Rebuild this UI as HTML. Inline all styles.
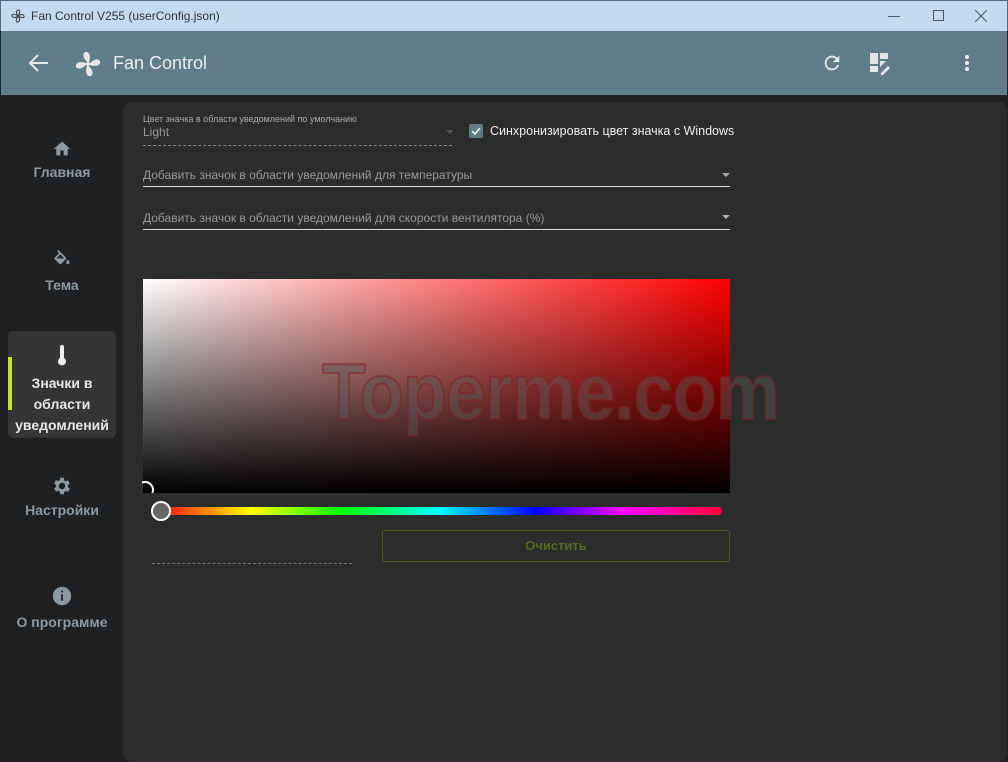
<!DOCTYPE html>
<html><head><meta charset="utf-8"><style>
*{margin:0;padding:0;box-sizing:border-box}
body{width:1008px;height:752px;overflow:hidden;background:#1f2022;font-family:"Liberation Sans","DejaVu Sans",sans-serif;position:relative}
.abs{position:absolute}
.title{left:0;top:0;width:1008px;height:31px;background:#c4daf0;border:1px solid #5a6a78;border-bottom:none}
.title span{position:absolute;left:30px;top:8px;font-size:12px;color:#333}
.appbar{left:1px;top:31px;width:1006px;height:64px;background:#5f7c89}
.side{left:1px;top:95px;width:121px;height:657px;background:#1f2022}
.panel{left:123px;top:102px;width:884px;height:660px;background:#2b2d2d;border-radius:8px}
.nav{position:absolute;left:0;width:122px;text-align:center;color:#8c9aa4;font-weight:bold;font-size:14px}
.lbl{color:#999;font-size:12px}
.line{height:1px;background:#ddd}
</style></head><body>
<div class="abs title">
<svg class="abs" style="left:9px;top:7px" width="16" height="16" viewBox="0 0 24 24"><path fill="none" stroke="#444" stroke-width="1.6" d="M12 12C9 9 9 4 12 3c3-1 4 3 0 9zM12 12c3 3 3 8 0 9-3 1-4-3 0-9zM12 12c3-3 8-3 9 0 1 3-3 4-9 0zM12 12c-3 3-8 3-9 0-1-3 3-4 9 0z"/></svg>
<span>Fan Control V255 (userConfig.json)</span>
<div class="abs" style="left:887px;top:15px;width:12px;height:1px;background:#555"></div>
<div class="abs" style="left:932px;top:9px;width:11px;height:11px;border:1px solid #555"></div>
<svg class="abs" style="left:974px;top:9px" width="12" height="12"><path d="M0 0L12 12M12 0L0 12" stroke="#555" stroke-width="1"/></svg>
</div>
<div class="abs appbar">
<svg class="abs" style="left:27px;top:22px" width="22" height="20" viewBox="0 0 22 20"><path d="M20 10H3M10 2L2 10l8 8" stroke="#e8e8e8" stroke-width="2" fill="none"/></svg>
<svg class="abs" style="left:72px;top:18px" width="30" height="30" viewBox="0 0 24 24"><path fill="#e6e6e6" d="M12 11c-2-2-5-5-3-8 2-2 6 0 4 7zM13 12c2-2 5-5 8-3 2 2 0 6-7 4zM12 13c2 2 5 5 3 8-2 2-6 0-4-7zM11 12c-2 2-5 5-8 3-2-2 0-6 7-4z"/><circle cx="12" cy="12" r="1.6" fill="#e6e6e6"/></svg>
<div class="abs" style="left:112px;top:22px;font-size:18px;color:#eee">Fan Control</div>
<svg class="abs" style="left:820px;top:21px" width="22" height="22" viewBox="0 0 24 24"><path fill="#e6e6e6" d="M17.65 6.35A7.96 7.96 0 0 0 12 4a8 8 0 1 0 7.73 10h-2.08A6 6 0 1 1 12 6c1.66 0 3.14.69 4.22 1.78L13 11h7V4l-2.35 2.35z"/></svg>
<svg class="abs" style="left:868px;top:21px" width="24" height="24" viewBox="0 0 24 24"><path fill="#e6e6e6" d="M1 1h8v11H1zM11 1h8v6h-8zM1 14h8v6H1zM11 9h6l-6 6z"/><path d="M12 21l7-7 2 2-7 7h-2z" fill="#e6e6e6"/></svg>
<div class="abs" style="left:964px;top:24px;width:4px;height:4px;border-radius:2px;background:#eee;box-shadow:0 6px 0 #eee,0 12px 0 #eee"></div>
</div>
<div class="abs side">
<div class="nav" style="top:44px"><svg width="20" height="18" viewBox="0 0 24 22"><path fill="#8c9aa4" d="M10 20v-6h4v6h5v-8h3L12 3 2 12h3v8z"/></svg><div style="margin-top:4px">Главная</div></div>
<div class="nav" style="top:155px"><svg width="22" height="20" viewBox="0 0 24 24"><path fill="#8c9aa4" d="M16.6 8.9L7.6 0 6.2 1.4l2.4 2.4-5.2 5.2c-.6.6-.6 1.5 0 2.1l5.5 5.5c.6.6 1.5.6 2.1 0l5.5-5.5c.6-.6.6-1.5 0-2.1zM5.2 10L10 5.2l4.8 4.8H5.2zM19 11.5s-2 2.2-2 3.5a2 2 0 0 0 4 0c0-1.3-2-3.5-2-3.5z"/></svg><div style="margin-top:4px">Тема</div></div>
<div class="abs" style="left:7px;top:236px;width:108px;height:107px;background:#333537;border-radius:5px"></div>
<div class="abs" style="left:7px;top:262px;width:4px;height:53px;background:#c6e51b"></div>
<div class="nav" style="top:250px;color:#e6e6e6;line-height:21px"><svg width="12" height="22" viewBox="0 0 12 22"><path fill="#eee" d="M4 2a2 2 0 0 1 4 0v11a4 4 0 1 1-4 0z"/></svg><div>Значки в<br>области<br>уведомлений</div></div>
<div class="nav" style="top:380px"><svg width="22" height="22" viewBox="0 0 24 24"><path fill="#8c9aa4" d="M19.4 13a7.5 7.5 0 0 0 0-2l2.1-1.6-2-3.5-2.5 1a7 7 0 0 0-1.7-1L15 3h-4l-.4 2.6a7 7 0 0 0-1.7 1l-2.5-1-2 3.5L6.6 11a7.5 7.5 0 0 0 0 2l-2.1 1.6 2 3.5 2.5-1c.5.4 1.1.7 1.7 1L11 21h4l.4-2.6c.6-.3 1.2-.6 1.7-1l2.5 1 2-3.5zM13 15.5a3.5 3.5 0 1 1 0-7 3.5 3.5 0 0 1 0 7z" transform="translate(-1 0)"/></svg><div style="margin-top:2px">Настройки</div></div>
<div class="nav" style="top:490px"><svg width="22" height="22" viewBox="0 0 24 24"><circle cx="12" cy="12" r="10" fill="#8c9aa4"/><path d="M11 10h2v7h-2zM11 6h2v2h-2z" fill="#1f2022"/></svg><div style="margin-top:4px">О программе</div></div>
</div>
<div class="abs panel"></div>
<div class="abs" style="left:143px;top:114px;font-size:9px;color:#aaa">Цвет значка в области уведомлений по умолчанию</div>
<div class="abs" style="left:143px;top:125px;font-size:12px;color:#999">Light</div>
<div class="abs" style="left:446px;top:130px;border:4px solid transparent;border-top:4px solid #555"></div>
<div class="abs" style="left:143px;top:145px;width:309px;border-top:1px dashed #888"></div>
<div class="abs" style="left:469px;top:124px;width:14px;height:14px;background:#5f7c89;border-radius:2px"></div>
<svg class="abs" style="left:469px;top:124px" width="14" height="14"><path d="M3 7l3 3 5-6" stroke="#eee" stroke-width="1.6" fill="none"/></svg>
<div class="abs" style="left:490px;top:124px;font-size:12.5px;color:#eee">Синхронизировать цвет значка с Windows</div>
<div class="abs lbl" style="left:143px;top:168px">Добавить значок в области уведомлений для температуры</div>
<div class="abs" style="left:722px;top:173px;border:4px solid transparent;border-top:4px solid #aaa"></div>
<div class="abs line" style="left:143px;top:186px;width:587px"></div>
<div class="abs lbl" style="left:143px;top:211px">Добавить значок в области уведомлений для скорости вентилятора (%)</div>
<div class="abs" style="left:722px;top:215px;border:4px solid transparent;border-top:4px solid #aaa"></div>
<div class="abs line" style="left:143px;top:229px;width:587px"></div>
<div class="abs" style="left:143px;top:279px;width:587px;height:214px;background:linear-gradient(to bottom,rgba(0,0,0,0),#000),linear-gradient(to right,#fff,#f00)"></div>
<div class="abs" style="left:136px;top:481px;width:18px;height:18px;border:2px solid #fff;border-radius:50%;clip-path:inset(0 0 6px 6px)"></div>
<div class="abs" style="left:322px;top:346px;font-size:80px;font-weight:bold;color:rgba(90,90,90,0.45);-webkit-text-stroke:2px rgba(130,30,30,0.5);letter-spacing:-1px;transform:scaleX(0.9);transform-origin:0 0;white-space:nowrap">Toperme.com</div>
<div class="abs" style="left:155px;top:507px;width:567px;height:8px;border-radius:4px;background:linear-gradient(to right,#f00,#ff0 17%,#0f0 33%,#0ff 50%,#00f 67%,#f0f 83%,#f03)"></div>
<div class="abs" style="left:151px;top:501px;width:20px;height:20px;border-radius:50%;background:#666;border:2px solid #fff"></div>
<div class="abs" style="left:152px;top:563px;width:200px;border-top:1px dashed #777"></div>
<div class="abs" style="left:382px;top:530px;width:348px;height:32px;border:1px solid #4e5a1a;border-radius:3px;color:#5a6b1c;font-size:13px;font-weight:bold;text-align:center;line-height:30px">Очистить</div>
</body></html>
